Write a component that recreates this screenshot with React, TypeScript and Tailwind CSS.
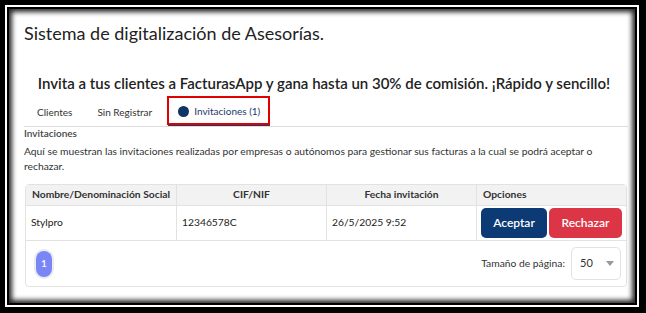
const font = { fontFamily: "Lato, 'Noto Sans', sans-serif" };

export default function App() {
  return (
    <div className="w-[646px] h-[313px] bg-black pt-[5px] pl-[5px] pr-[7px] pb-[6px]" style={font}>
      <div className="h-full border-2 border-white bg-black p-[2px]">
        <div className="h-full overflow-hidden bg-white shadow-[inset_0_0_5px_3px_rgba(0,0,0,0.85)] pl-[15px] pr-[7px] pt-[12px] text-[#222]">
          <h1 className="text-[18px] leading-[24px] font-normal text-[#222]">
            Sistema de digitalización de Asesorías.
          </h1>

          <p className="mt-[28px] whitespace-nowrap text-center text-[15px] leading-[20px] font-semibold text-[#222] pr-[4px]">
            Invita a tus clientes a FacturasApp y gana hasta un 30% de comisión. ¡Rápido y sencillo!
          </p>

          {/* tabs */}
          <div className="mt-[5px] flex h-[29px] items-stretch border-b border-[#ddd] text-[10px] text-[#333]">
            <div className="flex items-center px-[13px]">Clientes</div>
            <div className="flex items-center px-[12px]">Sin Registrar</div>
            <div className="relative ml-[4px] flex items-center gap-[5px] px-[10px] border-b-2 border-[#1b3a6b] text-[#1b3a6b]">
              <span className="h-[11px] w-[11px] rounded-full bg-[#0f3466]" />
              Invitaciones (1)
              <span className="absolute -left-[1px] right-0 top-[-2px] bottom-[-1px] border-2 border-[#e00000]" />
            </div>
          </div>

          <div className="text-[10px] leading-[11px] mt-[1px] font-semibold text-[#444]">Invitaciones</div>
          <p className="mt-[5px] text-[10.3px] leading-[15px] text-[#333] pr-[20px]">
            Aquí se muestran las invitaciones realizadas por empresas o autónomos para gestionar sus facturas a la cual
            se podrá aceptar o rechazar.
          </p>

          {/* table card */}
          <div className="mt-[10px] ml-[1px] w-[602px] rounded-[4px] border border-[#e2e2e2] text-[10.3px]">
            <div className="grid grid-cols-[151px_150px_150px_1fr] h-[21px] bg-[#f2f2f2] font-bold text-[#333] border-b border-[#e2e2e2]">
              <div className="flex items-center justify-center border-r border-[#e2e2e2]">Nombre/Denominación Social</div>
              <div className="flex items-center justify-center border-r border-[#e2e2e2]">CIF/NIF</div>
              <div className="flex items-center justify-center border-r border-[#e2e2e2]">Fecha invitación</div>
              <div className="flex items-center pl-[6px]">Opciones</div>
            </div>
            <div className="grid grid-cols-[151px_150px_150px_1fr] h-[35px] text-[#222] border-b border-[#e2e2e2]">
              <div className="flex items-center pl-[5px] border-r border-[#e2e2e2]">Stylpro</div>
              <div className="flex items-center pl-[5px] border-r border-[#e2e2e2]">12346578C</div>
              <div className="flex items-center pl-[5px] border-r border-[#e2e2e2]">26/5/2025 9:52</div>
              <div className="flex items-center gap-[2px] pl-[4px]">
                <button className="h-[30px] w-[66px] rounded-[5px] bg-[#0c3a74] text-white text-[12px] font-semibold">
                  Aceptar
                </button>
                <button className="h-[30px] w-[73px] rounded-[5px] bg-[#dc3545] text-white text-[12px] font-semibold">
                  Rechazar
                </button>
              </div>
            </div>
            <div className="flex h-[45px] items-center justify-between pl-[8px] pr-[5px]">
              <div className="rounded-full bg-[#ececec] p-[2px]">
                <div className="flex h-[26px] w-[16px] items-center justify-center rounded-full bg-[#7a85f8] text-[10px] font-semibold text-white">
                  1
                </div>
              </div>
              <div className="flex items-center gap-[6px] text-[10.3px] text-[#333]">
                <span>Tamaño de página:</span>
                <div className="flex h-[33px] w-[50px] items-center justify-between rounded-[5px] border border-[#e2e2e2] pl-[8px] pr-[6px] text-[11px]">
                  50
                  <svg width="8" height="5" viewBox="0 0 8 5">
                    <path d="M0 0h8L4 5z" fill="#999" />
                  </svg>
                </div>
              </div>
            </div>
          </div>
        </div>
      </div>
    </div>
  );
}
